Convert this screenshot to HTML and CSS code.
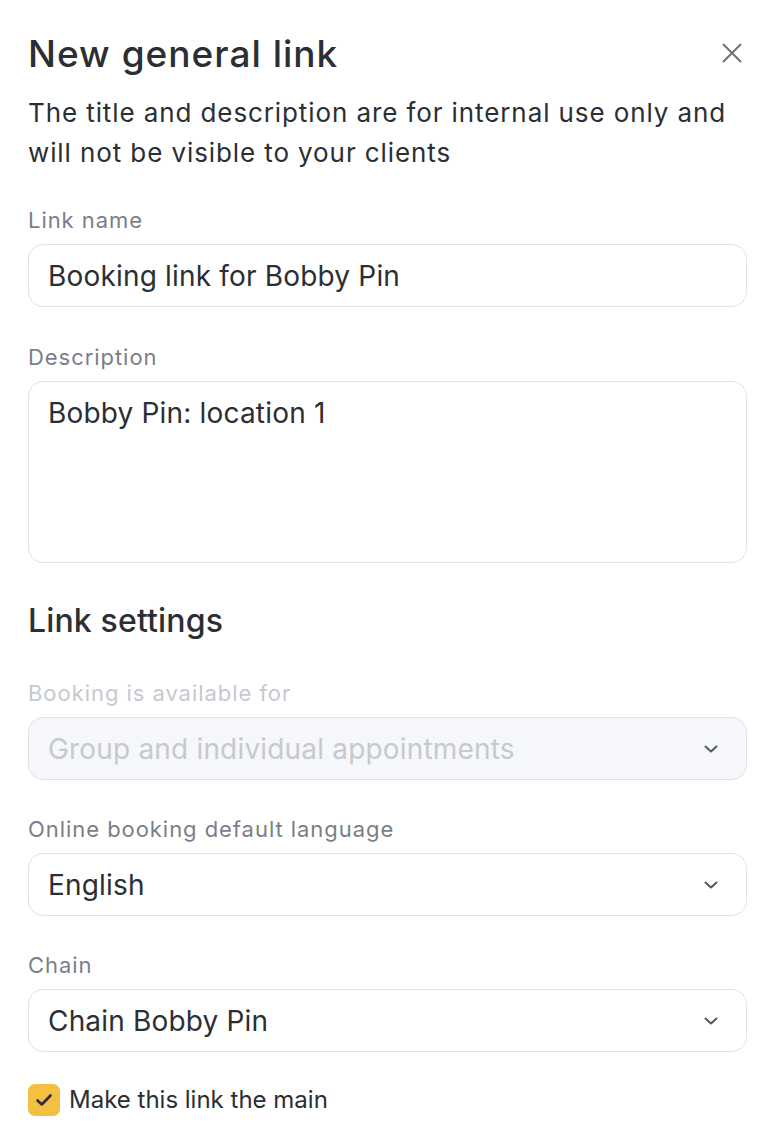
FILE: index.html
```html
<!DOCTYPE html>
<html lang="en">
<head>
<meta charset="utf-8">
<title>New general link</title>
<link rel="stylesheet" href="styles.css">
</head>
<body>
<div class="modal">
  <div class="header">
    <h1 class="title">New general link</h1>
    <button class="close" aria-label="Close">
      <svg width="20" height="20" viewBox="0 0 20 20"><path d="M1.5 1.5 L18.5 18.5 M18.5 1.5 L1.5 18.5" stroke="#6f727a" stroke-width="2" stroke-linecap="round" fill="none"/></svg>
    </button>
  </div>
  <p class="intro">The title and description are for internal use only and will not be visible to your clients</p>

  <div class="field top">
    <label class="label">Link name</label>
    <div class="input">Booking link for Bobby Pin</div>
  </div>

  <div class="field desc">
    <label class="label">Description</label>
    <div class="input textarea">Bobby Pin: location 1</div>
  </div>

  <h2 class="section">Link settings</h2>

  <div class="field first">
    <label class="label disabled">Booking is available for</label>
    <div class="input select is-disabled">
      <span>Group and individual appointments</span>
      <svg class="chev" width="14" height="8" viewBox="0 0 14 8"><path d="M1.5 1.5 L7 6.5 L12.5 1.5" stroke="#55585e" stroke-width="2" fill="none" stroke-linecap="round" stroke-linejoin="round"/></svg>
    </div>
  </div>

  <div class="field">
    <label class="label">Online booking default language</label>
    <div class="input select">
      <span>English</span>
      <svg class="chev" width="14" height="8" viewBox="0 0 14 8"><path d="M1.5 1.5 L7 6.5 L12.5 1.5" stroke="#55585e" stroke-width="2" fill="none" stroke-linecap="round" stroke-linejoin="round"/></svg>
    </div>
  </div>

  <div class="field">
    <label class="label">Chain</label>
    <div class="input select">
      <span>Chain Bobby Pin</span>
      <svg class="chev" width="14" height="8" viewBox="0 0 14 8"><path d="M1.5 1.5 L7 6.5 L12.5 1.5" stroke="#55585e" stroke-width="2" fill="none" stroke-linecap="round" stroke-linejoin="round"/></svg>
    </div>
  </div>

  <div class="check-row">
    <span class="checkbox">
      <svg width="18" height="14" viewBox="0 0 18 14"><path d="M2.5 7.5 L6.8 11.5 L15.5 2.5" stroke="#2b2f33" stroke-width="2.6" fill="none" stroke-linecap="round" stroke-linejoin="round"/></svg>
    </span>
    <span class="check-text">Make this link the main</span>
  </div>
</div>
</body>
</html>
```

FILE: styles.css
```css
* { box-sizing: border-box; }
html, body { margin: 0; padding: 0; background: #ffffff; }
body {
  font-family: Inter, "Noto Sans", "Liberation Sans", sans-serif;
  color: #2b2f33;
}
.modal {
  padding: 30px 25px 0 28px;
}
.header {
  display: flex;
  align-items: flex-start;
  justify-content: space-between;
}
.title {
  margin: 0;
  font-size: 37px;
  line-height: 48px;
  font-weight: 500;
  letter-spacing: 1px;
  color: #2b2f33;
}
.close {
  border: none;
  background: none;
  padding: 0;
  margin: 13px 5px 0 0;
  width: 20px;
  height: 20px;
  display: flex;
  cursor: pointer;
}
.intro {
  margin: 15px 0 0 0;
  font-size: 26px;
  line-height: 40px;
  letter-spacing: 0.9px;
  color: #2b2f33;
}
.field {
  margin-top: 34px;
  display: flex;
  flex-direction: column;
}
.field.top { margin-top: 32px; }
.field.desc { margin-top: 35px; }
.field.first { margin-top: 37px; }
.label {
  font-size: 22px;
  line-height: 30px;
  letter-spacing: 0.95px;
  color: #7b7e86;
  margin-bottom: 9px;
}
.label.disabled { color: #c6c9cf; }
.input {
  height: 63px;
  border: 1.5px solid #dfe1e6;
  border-radius: 15px;
  padding: 0 19px;
  font-size: 28px;
  letter-spacing: 0.18px;
  color: #2b2f33;
  display: flex;
  align-items: center;
  background: #fff;
}
.textarea {
  height: 182px;
  align-items: flex-start;
  padding-top: 14px;
}
.select {
  justify-content: space-between;
}
.select .chev { margin-right: 9px; }
.is-disabled {
  background: #f6f7fa;
  color: #c6c9cf;
}
.section {
  margin: 38px 0 0 0;
  font-size: 32px;
  line-height: 40px;
  font-weight: 500;
  letter-spacing: 0.15px;
  color: #2b2f33;
}
.check-row {
  margin-top: 32px;
  display: flex;
  align-items: center;
  gap: 9px;
}
.checkbox {
  width: 32px;
  height: 32px;
  border-radius: 7px;
  background: #f4c042;
  display: flex;
  align-items: center;
  justify-content: center;
}
.check-text {
  font-size: 24px;
  line-height: 32px;
  color: #2b2f33;
}
```
